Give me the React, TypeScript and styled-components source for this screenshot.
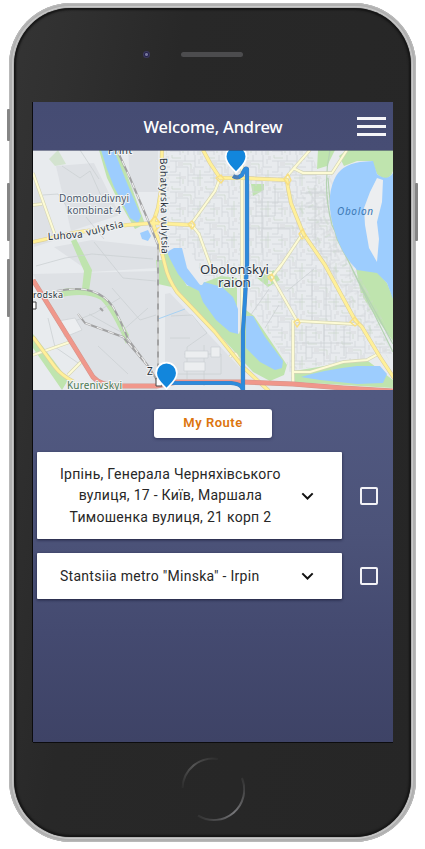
import React from "react";
import styled, { createGlobalStyle } from "styled-components";

const GlobalStyle = createGlobalStyle`
  * { box-sizing: border-box; }
  body { margin: 0; background: #fff; font-family: Roboto, sans-serif; overflow: hidden; }
`;

const Stage = styled.main`
  width: 425px;
  height: 849px;
  padding: 3px 0 0 9px;
`;

const Phone = styled.div`
  position: relative;
  width: 407px;
  height: 839px;
  border-radius: 62px;
  padding: 5px;
  background: #b3b3b3;
  box-shadow: inset 0 0 0 1px #b9b9b9, inset 0 0 0 3px #b0b0b0, inset 0 0 0 4px #c9c9c9;
`;

const SideKey = styled.span<{ $side: "left" | "right"; $top: number; $height: number }>`
  position: absolute;
  ${(p) => p.$side}: -2px;
  top: ${(p) => p.$top}px;
  width: 3px;
  height: ${(p) => p.$height}px;
  border-radius: 1px;
  background: #858585;
`;

const Bezel = styled.div`
  height: 829px;
  border-radius: 57px;
  padding: 0 18px 0 19px;
  background: linear-gradient(100deg, #343434 0%, #303030 12%, #282828 32%, #262626 100%);
  box-shadow: inset 0 0 2px 2px #151515;
  display: flex;
  flex-direction: column;
`;

const TopBezel = styled.div`
  height: 94px;
  padding: 44px 0 0 110px;
  display: flex;
  align-items: flex-start;
  gap: 31px;
`;

const Camera = styled.span`
  width: 7px;
  height: 7px;
  margin-top: -1px;
  border-radius: 50%;
  background: radial-gradient(circle, #77779c 0 1px, #25234b 2px, #3b385c 3px);
`;

const Speaker = styled.span`
  width: 62px;
  height: 5px;
  border-radius: 3px;
  background: #4c4c4e;
`;

const Screen = styled.section`
  width: 360px;
  height: 640px;
  flex: none;
  background: linear-gradient(#50577f 0, #515981 300px, #4c5379 430px, #444a70 530px, #3e4366 100%);
  box-shadow: -1px 0 0 #0c0c0e, 0 1px 0 #0c0c0e;
`;

const Header = styled.header`
  height: 48px;
  background: linear-gradient(#454c73, #474d74);
  display: grid;
  grid-template-columns: 44px 1fr 44px;
  align-items: center;
  justify-items: center;
`;

const Title = styled.h1`
  grid-column: 2;
  margin: 2px 0 0;
  font: 500 16.5px/24px "Noto Sans", sans-serif;
  letter-spacing: -0.18px;
  color: #fff;
  white-space: nowrap;
`;

const MenuButton = styled.button`
  width: 29px;
  height: 19px;
  margin: 0 0 0 1px;
  padding: 0;
  border: 0;
  background: none;
  display: flex;
  flex-direction: column;
  justify-content: space-between;
`;

const MenuBar = styled.span`
  height: 3px;
  width: 29px;
  background: #f5f5f8;
`;

const MapView = styled.svg`
  display: block;
  width: 360px;
  height: 240px;
`;

const Routes = styled.div`
  padding: 19px 0 0 4px;
  display: flex;
  flex-direction: column;
`;

const RouteTab = styled.button`
  align-self: center;
  width: 118px;
  height: 29px;
  margin: 0 4px 14px 0;
  padding: 0 0 1px;
  border: 0;
  border-radius: 3px;
  background: #fff;
  box-shadow: 0 1px 3px rgba(20, 20, 50, 0.5);
  color: #dc750d;
  font: 600 13px/20px Roboto, sans-serif;
  letter-spacing: 0.5px;
`;

const RouteRow = styled.div`
  display: flex;
  align-items: center;
  gap: 18px;
  margin-bottom: 14px;
`;

const RouteCard = styled.article<{ $height: number }>`
  width: 305px;
  height: ${(p) => p.$height}px;
  padding: 0 26px 0 22px;
  display: flex;
  align-items: center;
  justify-content: space-between;
  background: #fff;
  border-radius: 1px;
  box-shadow: 0 1px 3px rgba(10, 10, 35, 0.65);
`;

const RouteText = styled.p`
  margin: 1px 0 0;
  padding-left: 1px;
  font: 400 14px/21.5px Roboto, sans-serif;
  letter-spacing: 0.28px;
  color: #272727;
  text-align: center;
  white-space: pre;
`;

const Check = styled.span`
  width: 18px;
  height: 18px;
  border: 2px solid #f2f2f6;
  border-radius: 2px;
`;

const BottomBezel = styled.div`
  height: 95px;
  display: flex;
  justify-content: center;
  padding: 15px 0 0 0;
`;

const Chevron = () => (
  <svg width="17" height="16" viewBox="0 0 17 16" fill="none">
    <path d="M3.3 5.4 8.5 10.5 13.7 5.4" stroke="#111" strokeWidth="2" />
  </svg>
);

const Pin = ({ x, y }: { x: number; y: number }) => (
  <path
    transform={`translate(${x} ${y})`}
    d="M0 16C-3 12-10.3 7.5-10.3 0A10.3 10.3 0 0 1 10.3 0C10.3 7.5 3 12 0 16Z"
    fill="#1286dc"
    stroke="#fff"
    strokeWidth="1.7"
  />
);

const roads = {
  major: [
    "M162 150L161 190 158 208 153 223 160 245 165 265Q168 279 177 292L215 332 243 367 269 391",
    "M33 242L73 233 127 225 153 223 192 225",
    "M203 150L210 163 220 178H242L287 180 288 188 291 203 303 233 325 265 355 320 362 327 380 357 394 378",
    "M33 337L55 367Q61 375 74 382",
  ],
  minor: [
    "M242 150V391",
    "M33 173L55 235M33 205L42 204",
    "M192 225L199 234 212 270M192 223L215 191 220 178",
    "M310 150L288 175 287 183M293 168L303 173H332L347 150",
    "M303 233L278 270M281 265L272 277 297 321 354 324M260 273H272M293 320V384M293 372H310L343 362 367 360 378 354",
    "M33 355L70 342M83 360L68 375M230 357Q236 348 239 362",
  ],
};

const CityMap = () => (
  <MapView viewBox="33 150 360 240" fontFamily="'Noto Sans', sans-serif">
    <defs>
      <pattern id="blocks" width="34" height="31" patternUnits="userSpaceOnUse">
        <path
          d="M0 6H15V0M6 6V17H0M15 6H25V12H34M25 0V6M6 12H18V31M18 20H34M10 20H0M10 17V31M24 12V20M28 20V31M18 26H24V31M0 27H10M29 4V9"
          fill="none"
          stroke="#d2d6d9"
          strokeWidth=".8"
        />
        <path d="M2 0V3H11M13 9H21V18M30 15V31M13 29V23H6M22 23H33" fill="none" stroke="#c4d3c4" strokeWidth=".6" />
        <path d="M8 7h5v4h-5zM20 14h3v4h-3zM11 21h5v3h-5zM30 1h3v4h-3z" fill="#e0e2e5" />
      </pattern>
      <pattern id="slanted" width="32" height="34" patternUnits="userSpaceOnUse" patternTransform="rotate(-30)">
        <path
          d="M0 5H18V0M18 5V20H32M8 5V15H18M0 24H12V34M12 20V29H28M24 20V34M24 0V12H32M4 8V20M22 8V16M16 33H22"
          fill="none"
          stroke="#cfd3d6"
          strokeWidth=".8"
        />
        <path d="M2 11H6M12 9V19M28 24V31M3 28H9" stroke="#c4d5c3" />
      </pattern>
    </defs>

    <path d="M33 150H393V390H33Z" fill="#e8ebee" />
    <path d="M33 178L56 240 34 247V171M56 166L94 163 120 215 71 231ZM128 150H158V192H131ZM54 247L92 240 157 247V268L90 272ZM33 274L157 271V390H98ZM170 293L243 371V382H165V294Z" fill="#dee1e5" />

    <g fill="#bfe4ae">
      <path d="M347 150H393V171Q390 181 381 177L377 174 372 161 357 161 344 166 339 156Z" />
      <path d="M356 268L377 272 387 283 393 298V341Q378 321 361 294Z" />
      <path d="M157 246L167 251 187 286 204 285 218 315 239 334 246 310 254 316 287 365 284 375 270 381 253 372 215 330 177 292Z" />
      <path d="M203 283L221 276 237 278V310L218 316Z" />
      <path d="M294 371L343 363 368 361 393 380V388L295 382Z" />
      <path d="M99 150H118L145 224 135 229 116 196 107 178ZM71 241L76 239 92 270 89 291 82 289 84 271Z" />
      <path d="M63 289Q92 284 112 304L129 335 126 344Q112 311 101 300 85 291 57 298ZM33 334L54 361 68 380 62 390 33 348Z" />
      <path d="M251 184H264V190L253 196ZM318 150H335L327 166 317 169ZM257 278L274 270 280 280 268 287Z" />
      <path d="M156 260H168L181 281 176 288 158 284Z" />
    </g>
    <path d="M58 150L66 164 55 166 49 159Z" fill="#d3e3cf" />

    <path d="M166 151H240V276L205 280 190 250 167 246Z" fill="url(#blocks)" />
    <path d="M246 151H310L329 196 336 238 363 292 392 354 376 353 367 358 293 370V385L286 360 250 305Z" fill="url(#blocks)" />
    <path d="M332 174L339 235 359 274 393 340V366L329 269 294 201Z" fill="url(#slanted)" opacity=".75" />
    <g fill="none" stroke="#cbd0d3" strokeWidth=".8">
      <path d="M62 166L80 178 90 171 102 198M80 150L99 179M43 195L58 194 72 214M86 217L104 239M36 266L65 258 92 254 153 259M94 242L123 278 156 281M41 297L62 326 95 313 120 298M89 314L121 332 148 308M98 346L128 374M48 318L55 347 81 365M112 288L140 320 156 315M171 316L192 315 207 333 187 347V379M184 354H221V374H168M204 345V386M170 338H190" />
      <path d="M249 184V264M262 181V253M275 184V216H251M253 202H289M248 228H299M315 185V239M301 193H328M305 207H331M309 220H333M317 251H346M287 291L314 269M312 269V320M326 275V323M335 306H348M306 326V360M324 325V356M294 343H353M344 326V356M269 289L250 316M279 305L265 328" />
    </g>
    <path d="M58 321L75 318 82 330 65 337ZM185 351H208V358H185ZM211 347H220V357H211ZM184 362H205V371H184Z" fill="#eceef0" stroke="#cbd0d4" strokeWidth=".7" />
    <path d="M330 150Q322 187 332 225L354 273 393 352M328 178Q331 218 337 239L358 280 393 344" fill="none" stroke="#b5d3b3" strokeWidth="1.2" />

    <g fill="#9dcdfe">
      <path d="M101 150H114L121 168 127 183 141 216 138 223 130 218 122 202 114 187 107 169ZM140 233L148 230 151 236 148 241 142 239Z" />
      <path d="M167 252L174 248 182 248 187 268 197 281Q202 289 204 282L222 287 233 297 238 309V334L230 332 216 320 203 302 199 291 187 285 178 274 170 259Z" />
      <path d="M246 316L253 316 265 337 283 361 282 368 275 370 260 362 246 348Z" />
      <path d="M301 377Q323 370 357 366L380 366 387 374 383 383 357 384 320 380Z" />
      <path d="M360 162L373 161 377 174Q387 182 393 173V299L387 283 377 273 357 270Q342 255 335 232 325 201 334 180 340 165 360 162Z" />
    </g>
    <path d="M377 178L383 180 382 202 377 222 379 239 377 262 369 248 365 225 364 208 370 192Z" fill="#eceef0" />
    <path d="M158 319L185 309" stroke="#a8d2f3" />

    <g fill="none" strokeLinejoin="round">
      {roads.minor.map((d) => <path key={d} d={d} stroke="#d5d5b5" strokeWidth="3.3" />)}
      {roads.minor.map((d) => <path key={d + "fill"} d={d} stroke="#fdfbd5" strokeWidth="2.1" />)}
      {roads.major.map((d) => <path key={d} d={d} stroke="#ddd09a" strokeWidth="4" />)}
      {roads.major.map((d) => <path key={d + "fill"} d={d} stroke="#fff099" strokeWidth="2.8" />)}
      <path d="M150 222L155 216 159 222 165 224 158 228 154 232 149 224M188 224L192 221 195 225 192 229ZM216 178L221 175 224 179 221 183ZM284 179L288 174 291 180 288 185ZM299 234L303 229 306 236 302 239ZM268 277L272 274 274 278 271 281ZM294 322L298 319 300 323 297 327ZM350 322L355 317 359 323 355 326Z" stroke="#f8df82" strokeWidth="1.4" />
      <path d="M33 280L67 335 93 377Q102 387 122 386L157 386 177 382H243L293 384 343 388 393 391" stroke="#d3968c" strokeWidth="5" />
      <path d="M33 280L67 335 93 377Q102 387 122 386L157 386 177 382H243L293 384 343 388 393 391" stroke="#f0978b" strokeWidth="3.8" />
      <path d="M117 150L130 178 147 218 158 245V382M57 291Q79 287 91 291 105 295 113 307 121 321 128 339L149 367 158 382M78 314L85 323 123 337 147 365M100 308L103 311" stroke="#a2a2a3" strokeWidth="2" />
      <path d="M117 150L130 178 147 218 158 245V382M57 291Q79 287 91 291 105 295 113 307 121 321 128 339L149 367M78 314L85 323 123 337 147 365" stroke="#eee" strokeWidth="1.1" strokeDasharray="6 6" />
      <path d="M233 176Q236 178 239 177L242 175Q245 167 247 169V265L243 331V391M243 391Q243 384 231 383H167" stroke="#4a7fb8" strokeWidth="4.2" />
      <path d="M239 177L242 175Q245 167 247 169V265L243 331V391M243 391Q243 384 231 383H167" stroke="#2c8bdd" strokeWidth="3.2" />
    </g>

    <g fill="#2b3340" stroke="#f1f3f4" strokeWidth="2" paintOrder="stroke" fontSize="10">
      <text x="108" y="154" textLength="24">Print</text>
      <g fill="#4a586b">
        <text x="59" y="202" textLength="70">Domobudivnyi</text>
        <text x="67" y="214" textLength="54">kombinat 4</text>
      </g>
      <text x="48" y="240" transform="rotate(-4 48 240)" textLength="35">Luhova</text>
      <text x="87" y="236" transform="rotate(-14 87 236)" textLength="38">vulytsia</text>
      <text x="160" y="158" transform="rotate(89 160 158)" textLength="96">Bohatyrska vulytsia</text>
      <g fontSize="12" fill="#2d343e">
        <text x="200" y="274" textLength="69" lengthAdjust="spacingAndGlyphs">Obolonskyi</text>
        <text x="218" y="287" textLength="33" lengthAdjust="spacingAndGlyphs">raion</text>
      </g>
      <text x="33" y="298" textLength="30" fontSize="9">rodska</text>
      <text x="147" y="375" fontSize="10">Z</text>
      <text x="67" y="389" textLength="55" fill="#4c7953">Kurenivskyi</text>
    </g>
    <text x="337" y="215" textLength="36" fontSize="10" fontStyle="italic" fill="#3b78b4">Obolon</text>
    <path d="M33 302H36V309H33M156 378H162V386H156Z" fill="#fff" stroke="#444" />
    <path d="M247 263V266L245 290" fill="none" stroke="#2c8bdd" strokeWidth="3" opacity=".65" />
    <Pin x={236} y={156.5} />
    <Pin x={166.5} y={373} />
    <path d="M33 150.4H393" stroke="#393f60" opacity=".65" />
  </MapView>
);

const HomeRing = () => (
  <svg width="64" height="64" viewBox="0 0 64 64" fill="none">
    <defs>
      <linearGradient id="ringTop" x1="1" y1="32" x2="37" y2="1" gradientUnits="userSpaceOnUse">
        <stop stopColor="#2b2b2b" /><stop offset=".5" stopColor="#555" /><stop offset="1" stopColor="#2b2b2b" />
      </linearGradient>
      <linearGradient id="ringBottom" x1="61" y1="20" x2="17" y2="59" gradientUnits="userSpaceOnUse">
        <stop stopColor="#333" /><stop offset=".5" stopColor="#77777a" /><stop offset="1" stopColor="#333" />
      </linearGradient>
    </defs>
    <path d="M1.5 31A30.5 30.5 0 0 1 37 1.9" stroke="url(#ringTop)" strokeWidth="2" />
    <path d="M61 21A30.5 30.5 0 0 1 17 58.6" stroke="url(#ringBottom)" strokeWidth="2" />
  </svg>
);

const routeList = [
  { text: "Ірпінь, Генерала Черняхівського\nвулиця, 17 - Київ, Маршала\nТимошенка вулиця, 21 корп 2", height: 87 },
  { text: 'Stantsiia metro "Minska" - Irpin', height: 46 },
];

export default function App() {
  return (
    <Stage>
      <GlobalStyle />
      <Phone>
        <SideKey $side="left" $top={106} $height={32} />
        <SideKey $side="left" $top={180} $height={58} />
        <SideKey $side="left" $top={256} $height={58} />
        <SideKey $side="right" $top={180} $height={58} />
        <Bezel>
          <TopBezel><Camera /><Speaker /></TopBezel>
          <Screen>
            <Header>
              <Title>Welcome, Andrew</Title>
              <MenuButton aria-label="Menu"><MenuBar /><MenuBar /><MenuBar /></MenuButton>
            </Header>
            <CityMap />
            <Routes>
              <RouteTab>My Route</RouteTab>
              {routeList.map((route) => (
                <RouteRow key={route.text}>
                  <RouteCard $height={route.height}>
                    <RouteText>{route.text}</RouteText>
                    <Chevron />
                  </RouteCard>
                  <Check role="checkbox" aria-checked="false" />
                </RouteRow>
              ))}
            </Routes>
          </Screen>
          <BottomBezel><HomeRing /></BottomBezel>
        </Bezel>
      </Phone>
    </Stage>
  );
}
